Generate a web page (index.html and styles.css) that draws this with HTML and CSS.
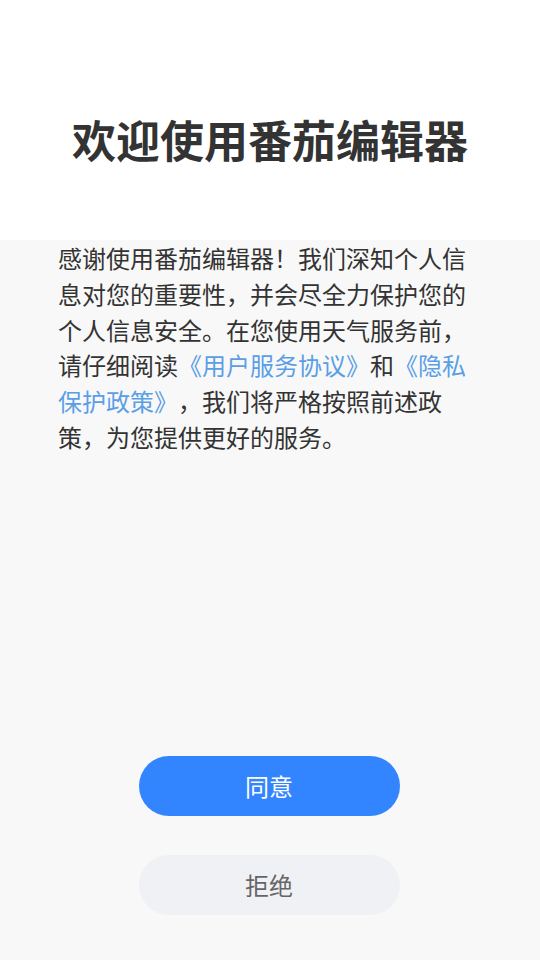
FILE: index.html
```html
<!DOCTYPE html>
<html lang="zh">
<head>
<meta charset="utf-8">
<link rel="stylesheet" href="styles.css">
</head>
<body>
<div class="page">
  <header class="header">
    <h1 class="title">欢迎使用番茄编辑器</h1>
  </header>
  <main class="content">
    <p class="text">感谢使用番茄编辑器！我们深知个人信息对您的重要性，并会尽全力保护您的个人信息安全。在您使用天气服务前，请仔细阅读<span class="link">《用户服务协议》</span>和<span class="link">《隐私保护政策》</span>，我们将严格按照前述政策，为您提供更好的服务。</p>
    <div class="actions">
      <button class="btn btn-agree">同意</button>
      <button class="btn btn-reject">拒绝</button>
    </div>
  </main>
</div>
</body>
</html>
```
FILE: styles.css
```css
* { box-sizing: border-box; }
html, body { margin: 0; padding: 0; }
body {
  width: 540px;
  height: 960px;
  background: #f8f8f8;
  font-family: "Noto Sans CJK SC", "Noto Sans", sans-serif;
  overflow: hidden;
}
.page { display: flex; flex-direction: column; height: 960px; }
.header {
  height: 240px;
  background: #ffffff;
  display: flex;
  align-items: flex-start;
  justify-content: center;
  padding-top: 117px;
}
.title {
  margin: 0;
  font-size: 44px;
  font-weight: 700;
  color: #333333;
  line-height: 44px;
}
.content {
  flex: 1;
  display: flex;
  flex-direction: column;
  padding: 0 60px 0 58px;
}
.text {
  margin: 0;
  font-size: 24px;
  line-height: 35.8px;
  color: #333333;
  width: 410px;
  text-align: left;
  text-spacing-trim: space-all;
  font-feature-settings: "chws" 0, "halt" 0;
}
.link { color: #5a9fe6; }
.actions {
  margin-top: 301px;
  display: flex;
  flex-direction: column;
  align-items: center;
  gap: 39px;
}
.btn {
  width: 261px;
  height: 60px;
  border: none;
  border-radius: 30px;
  font-family: "Noto Sans CJK SC", "Noto Sans", sans-serif;
  font-size: 24px;
  padding: 0;
}
.btn-agree { background: #3385ff; color: #ffffff; }
.btn-reject { background: #f0f1f5; color: #666666; }
```
